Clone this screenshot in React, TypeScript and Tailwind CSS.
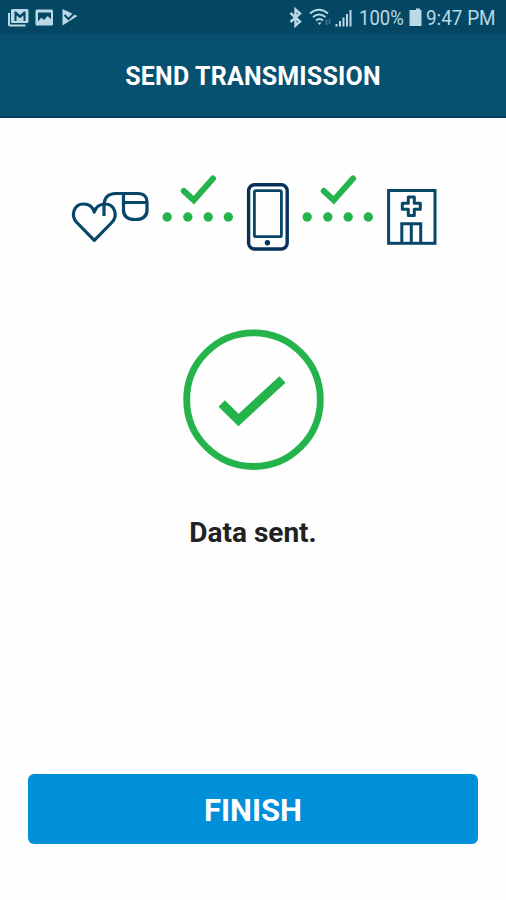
function StatusBar() {
    return (
        <div className="flex h-[34px] items-center justify-between bg-[#044765] text-[#b9d9e4]">
            <svg width="90" height="34" viewBox="0 0 90 34" fill="currentColor">
                <path d="M8 13h2v11.500h15.500v2H10a2 2 0 0 1-2-2z" />
                <path
                    fillRule="evenodd"
                    d="M12.500 9H27a1.500 1.500 0 0 1 1.500 1.500V21.500A1.500 1.500 0 0 1 27 23H12.500A1.500 1.500 0 0 1 11 21.500V10.500A1.500 1.500 0 0 1 12.500 9zM14.500 11.500V21H16.500V15.500L20 18.300L23.500 15.500V21H25.500V11.500H24L20 15L16 11.500z"
                />
                <path
                    fillRule="evenodd"
                    d="M37 9.500h14.500a1.500 1.500 0 0 1 1.500 1.500v13a1.500 1.500 0 0 1-1.500 1.500H37a1.500 1.500 0 0 1-1.500-1.500V11A1.500 1.500 0 0 1 37 9.500zM38 12.500V21.500L41.500 17.500L44 20L47.500 16L51 19V12.500z"
                />
                <path d="M62.500 9L77.500 16L62.500 25.500z" />
                <path d="M64.500 15l4 4l5.500-5.500" fill="none" stroke="#044765" strokeWidth="2" />
            </svg>
            <div className="flex h-full items-center">
                <svg width="73" height="34" viewBox="0 0 73 34" fill="none" stroke="currentColor">
                    <path d="M4.500 13L14 21.500L9.500 25.500V9.500L14 13.500L4.500 22" strokeWidth="2.400" />
                    <g strokeWidth="2">
                        <path d="M24 13.500q9-7.500 18 0" />
                        <path d="M27 17q6-5 12.500 0" />
                        <path d="M30 20.500q3.500-3 7 0" />
                    </g>
                    <path d="M31.500 22.500h4l-2 2.500z" fill="currentColor" stroke="none" />
                    <path d="M40.500 20v5M43.500 19v5" strokeWidth="1.500" opacity="0.350" />
                    <path d="M50.500 24v2.500M54 21v5.500M57.500 17.500v9M61 14v12.500M64.500 10v16.500" strokeWidth="2" />
                </svg>
                <span className="w-[49px] pt-0.5">
                    <span className="block origin-left scale-x-[0.88] font-[Roboto,sans-serif] text-[21px] leading-[34px] whitespace-nowrap">
                        100%
                    </span>
                </span>
                <svg width="18" height="34" viewBox="0 0 18 34" fill="currentColor">
                    <path d="M4 10h4V8.500h4V10h1.500v16H1.500V10z" />
                </svg>
                <span className="w-[80px] pt-0.5">
                    <span className="block origin-left scale-x-[0.9] font-[Roboto,sans-serif] text-[21px] leading-[34px] whitespace-nowrap">
                        9:47 PM
                    </span>
                </span>
            </div>
        </div>
    );
}

function DeviceIcon() {
    return (
        <svg width="80" height="90" viewBox="0 0 80 90" fill="none" stroke="#064668" strokeWidth="3.200" strokeLinejoin="round">
            <path d="M24.300 70.300L6.800 52.500C0.500 46 3.500 34 13.500 34C19.500 34 23 37.500 24.300 42C25.600 37.500 29.500 34 35.100 34C45 34 48.200 46 41.800 52.500Z" />
            <path d="M34 46V36C34 28 38 23.500 46 23.500H68C74 23.500 77 27 77 32V40C77 46.500 73 49.500 65.200 49.500C57.500 49.500 53.500 46.500 53.500 40V23.500M53.500 32.500H77" />
        </svg>
    );
}

function PhoneIcon() {
    return (
        <svg width="44" height="90" viewBox="0 0 44 90" fill="none" stroke="#05325c">
            <rect x="2.600" y="14.700" width="38.600" height="64.300" rx="6" strokeWidth="3.400" />
            <rect x="8.400" y="20.700" width="27" height="46" rx="1.500" stroke="#064668" strokeWidth="2.800" />
            <circle cx="21.400" cy="72.700" r="2.700" fill="#05325c" stroke="none" />
        </svg>
    );
}

function HospitalIcon() {
    return (
        <svg width="52" height="90" viewBox="0 0 52 90" fill="none" stroke="#064668" strokeWidth="3">
            <rect x="2.600" y="20.500" width="46.400" height="52.800" />
            <path d="M22.300 27h6v6.200h6v6h-6v6.300h-6v-6.300h-6v-6h6z" strokeLinejoin="round" />
            <path d="M15.800 73V53.800H34.700V73M25.300 53.800V73" />
        </svg>
    );
}

function SentLink() {
    return (
        <svg width="80" height="90" viewBox="0 0 80 90" fill="#25b34b">
            <path
                d="M25.800 21L35.800 30.300L55 8.500"
                fill="none"
                stroke="#25b34b"
                strokeWidth="6"
                strokeLinecap="round"
            />
            {[9.2, 29.8, 50.2, 70.3].map((cx) => (
                <circle key={cx} cx={cx} cy="47" r="4.700" />
            ))}
        </svg>
    );
}

export default function App() {
    return (
        <div className="flex h-[900px] w-[506px] flex-col bg-[#fefefe] font-[Roboto,sans-serif]">
            <StatusBar />
            <header className="flex h-[84px] items-center justify-center border-b-2 border-[#043f61] bg-[#07506f] pt-[3px]">
                <h1 className="text-[25px] leading-none font-bold tracking-[0.18px] whitespace-nowrap text-white">
                    SEND TRANSMISSION
                </h1>
            </header>

            <main className="flex flex-1 flex-col items-center">
                <div className="mt-[52px] ml-[2px] flex w-[368px] justify-between">
                    <DeviceIcon />
                    <SentLink />
                    <PhoneIcon />
                    <SentLink />
                    <HospitalIcon />
                </div>

                <svg className="mt-[69px]" width="142" height="142" viewBox="0 0 142 142" fill="none" stroke="#25b34b">
                    <circle cx="71.500" cy="70.700" r="66.800" strokeWidth="6.800" />
                    <path d="M39.700 74.500L56.500 91L100.500 50.500" strokeWidth="9" />
                </svg>

                <p className="mt-[48px] text-[28px] leading-[28px] font-bold text-[#222222]">Data sent.</p>
            </main>

            <footer className="px-7 pb-14">
                <button className="h-[70px] w-full rounded-md bg-[#0090d9] pt-1 text-[31px] font-bold text-white">
                    FINISH
                </button>
            </footer>
        </div>
    );
}
